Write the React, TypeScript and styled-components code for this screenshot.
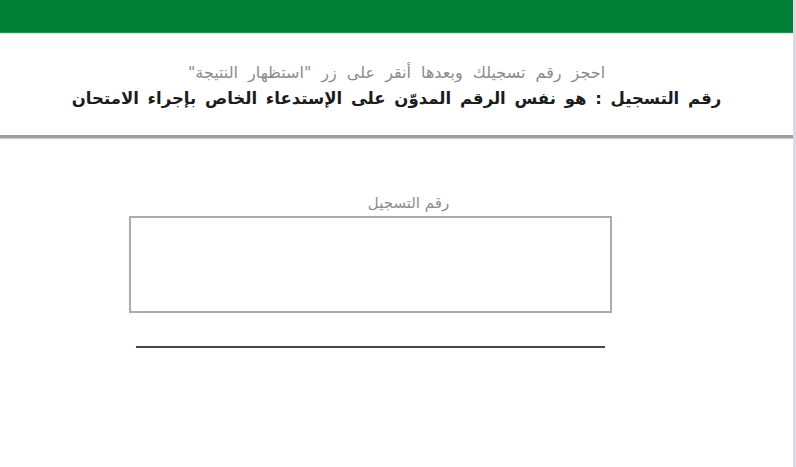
import React from "react";
import styled, { createGlobalStyle } from "styled-components";

const Global = createGlobalStyle`
  html, body { margin: 0; padding: 0; background: #ffffff; }
  body { font-family: "DejaVu Sans", "Noto Sans", sans-serif; }
`;

const Page = styled.div`
  width: 796px;
  height: 467px;
  box-sizing: border-box;
  border-right: 3px solid #d9dbe0;
  background: #fff;
  display: flex;
  flex-direction: column;
`;

const Header = styled.header`
  height: 33px;
  background: #028037;
  border-bottom: 1px solid #c9ecd6;
`;

const Notice = styled.section`
  direction: rtl;
  display: flex;
  flex-direction: column;
  align-items: center;
  padding-top: 28px;
  height: 104px;
  box-sizing: border-box;
  border-bottom: 3px solid #9c9c9c;
  box-shadow: 0 1px 1px #d0d0d0, 0 -1px 1px #e4e4e4;
`;

const Hint = styled.p`
  margin: 0;
  font-size: 16px;
  line-height: 22px;
  word-spacing: 5px;
  color: #8c8c8c;
`;

const Rule = styled.p`
  margin: 3px 0 0;
  font-size: 16.5px;
  line-height: 24px;
  word-spacing: 3px;
  font-weight: bold;
  color: #1c1c1c;
`;

const Form = styled.form`
  direction: rtl;
  width: 483px;
  margin: 55px 0 0 129px;
  display: flex;
  flex-direction: column;
  align-items: center;
`;

const Label = styled.label`
  font-size: 15px;
  line-height: 20px;
  color: #8e8e8e;
  margin-left: 76px;
`;

const Field = styled.input`
  box-sizing: border-box;
  width: 483px;
  height: 97px;
  margin-top: 3px;
  border: 2px solid #a9acb0;
  background: #fff;
  outline: none;
`;

const Underline = styled.div`
  width: 469px;
  height: 2px;
  margin-top: 33px;
  background: #3e4a58;
`;

export default function App() {
  return (
    <Page>
      <Global />
      <Header />
      <Notice>
        <Hint>احجز رقم تسجيلك وبعدها أنقر على زر "استظهار النتيجة"</Hint>
        <Rule>رقم التسجيل : هو نفس الرقم المدوّن على الإستدعاء الخاص بإجراء الامتحان</Rule>
      </Notice>
      <Form onSubmit={(e) => e.preventDefault()}>
        <Label htmlFor="reg">رقم التسجيل</Label>
        <Field id="reg" type="text" />
        <Underline />
      </Form>
    </Page>
  );
}
